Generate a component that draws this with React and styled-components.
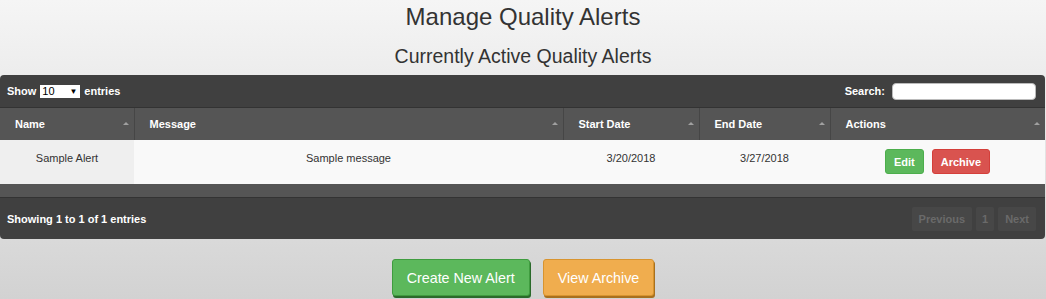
import React from "react";
import styled, { createGlobalStyle } from "styled-components";

const Global = createGlobalStyle`
  html, body { margin: 0; padding: 0; }
  body {
    width: 1046px;
    height: 299px;
    overflow: hidden;
    font-family: "Liberation Sans", Arial, sans-serif;
    background: linear-gradient(to bottom, #f5f5f5 0%, #e6e6e6 45%, #d2d2d2 100%);
    color: #333;
  }
`;

const Page = styled.div`
  display: flex;
  flex-direction: column;
  align-items: center;
  height: 299px;
`;

const Title = styled.h1`
  margin: 3px 0 0;
  font-size: 24px;
  font-weight: 400;
  line-height: 28px;
  color: #333;
`;

const Subtitle = styled.h2`
  margin: 14px 0 0;
  font-size: 19.5px;
  font-weight: 400;
  line-height: 22px;
  color: #333;
`;

const Wrapper = styled.div`
  align-self: stretch;
  margin: 8px 1px 0 0;
  background: #404040;
  border-radius: 4px;
  overflow: hidden;
  font-size: 11px;
  font-weight: 700;
  color: #fff;
`;

const TopBar = styled.div`
  height: 32px;
  display: flex;
  align-items: center;
  justify-content: space-between;
  padding: 0 9px 0 7px;
  border-bottom: 1px solid #333;
`;

const Label = styled.label`
  display: flex;
  align-items: center;
  gap: 4px;
`;

const FakeSelect = styled.span`
  display: inline-flex;
  align-items: center;
  justify-content: space-between;
  width: 40px;
  height: 13px;
  box-sizing: border-box;
  padding: 0 3px 0 2px;
  background: #fff;
  color: #000;
  font-weight: 400;
  font-size: 11px;
  line-height: 13px;
`;

const Caret = styled.span`
  font-size: 8px;
`;

const SearchInput = styled.input`
  width: 144px;
  height: 17px;
  box-sizing: border-box;
  border: 1px solid #bbb;
  border-radius: 4px;
  background: #fff;
  margin-left: 3px;
  padding: 0;
`;

const Table = styled.table`
  width: 100%;
  border-collapse: collapse;
  table-layout: fixed;
`;

const Th = styled.th`
  position: relative;
  height: 32px;
  padding: 0 15px;
  text-align: left;
  background: #555;
  border-right: 1px solid #464646;
  font-size: 11px;
  font-weight: 700;
  color: #fff;
  &:last-child { border-right: none; }
`;

const SortArrow = styled.span`
  position: absolute;
  right: 5px;
  top: 14px;
  width: 0;
  height: 0;
  border-left: 3px solid transparent;
  border-right: 3px solid transparent;
  border-bottom: 3px solid #a0a0a0;
`;

const Td = styled.td`
  height: 44px;
  padding: 10px 8px 0;
  box-sizing: border-box;
  vertical-align: top;
  text-align: center;
  background: ${(p) => (p.$sorted ? "#efefef" : "#f9f9f9")};
  color: #333;
  font-weight: 400;
  font-size: 11px;
  line-height: 16px;
`;

const Actions = styled.div`
  display: flex;
  justify-content: center;
  gap: 8px;
  margin-top: -1px;
`;

const SmallBtn = styled.button`
  height: 25px;
  padding: 0 8px;
  border: 1px solid ${(p) => (p.$variant === "danger" ? "#d43f3a" : "#4cae4c")};
  border-radius: 3px;
  background: ${(p) => (p.$variant === "danger" ? "#d9534f" : "#5cb85c")};
  color: #fff;
  font-family: inherit;
  font-size: 11px;
  font-weight: 700;
`;

const Strip = styled.div`
  height: 13px;
  background: #555;
  border-bottom: 1px solid #333;
`;

const Footer = styled.div`
  height: 41px;
  display: flex;
  align-items: center;
  justify-content: space-between;
  padding: 0 9px 0 7px;
`;

const Pager = styled.div`
  display: flex;
  gap: 4px;
`;

const PageBtn = styled.span`
  height: 24px;
  display: flex;
  align-items: center;
  padding: 0 ${(p) => (p.$narrow ? "6px" : "7px")};
  background: #474747;
  border-radius: 2px;
  color: #6a6a6a;
  font-weight: 700;
`;

const ButtonRow = styled.div`
  display: flex;
  gap: 13px;
  margin-top: 20px;
`;

const BigBtn = styled.button`
  height: 37px;
  padding: 0 14px;
  border: 1px solid ${(p) => (p.$variant === "warning" ? "#d8942f" : "#3f9c3f")};
  border-radius: 3px;
  background: ${(p) => (p.$variant === "warning" ? "#f0ad4e" : "#5cb85c")};
  box-shadow: 1px 2px 0 ${(p) => (p.$variant === "warning" ? "#a8701f" : "#2b6a2b")};
  color: #fff;
  font-family: inherit;
  font-size: 14.3px;
  font-weight: 400;
`;

const columns = [
  { key: "name", label: "Name", width: 134 },
  { key: "message", label: "Message", width: 429 },
  { key: "start", label: "Start Date", width: 136 },
  { key: "end", label: "End Date", width: 131 },
  { key: "actions", label: "Actions" },
];

export default function App() {
  return (
    <>
      <Global />
      <Page>
        <Title>Manage Quality Alerts</Title>
        <Subtitle>Currently Active Quality Alerts</Subtitle>
        <Wrapper>
          <TopBar>
            <Label>
              Show
              <FakeSelect>
                10 <Caret>▼</Caret>
              </FakeSelect>
              entries
            </Label>
            <Label>
              Search:
              <SearchInput type="text" />
            </Label>
          </TopBar>
          <Table>
            <colgroup>
              {columns.map((c) => (
                <col key={c.key} style={c.width ? { width: c.width } : undefined} />
              ))}
            </colgroup>
            <thead>
              <tr>
                {columns.map((c) => (
                  <Th key={c.key}>
                    {c.label}
                    <SortArrow />
                  </Th>
                ))}
              </tr>
            </thead>
            <tbody>
              <tr>
                <Td $sorted>Sample Alert</Td>
                <Td>Sample message</Td>
                <Td>3/20/2018</Td>
                <Td>3/27/2018</Td>
                <Td>
                  <Actions>
                    <SmallBtn>Edit</SmallBtn>
                    <SmallBtn $variant="danger">Archive</SmallBtn>
                  </Actions>
                </Td>
              </tr>
            </tbody>
          </Table>
          <Strip />
          <Footer>
            <span>Showing 1 to 1 of 1 entries</span>
            <Pager>
              <PageBtn>Previous</PageBtn>
              <PageBtn $narrow>1</PageBtn>
              <PageBtn>Next</PageBtn>
            </Pager>
          </Footer>
        </Wrapper>
        <ButtonRow>
          <BigBtn>Create New Alert</BigBtn>
          <BigBtn $variant="warning">View Archive</BigBtn>
        </ButtonRow>
      </Page>
    </>
  );
}
